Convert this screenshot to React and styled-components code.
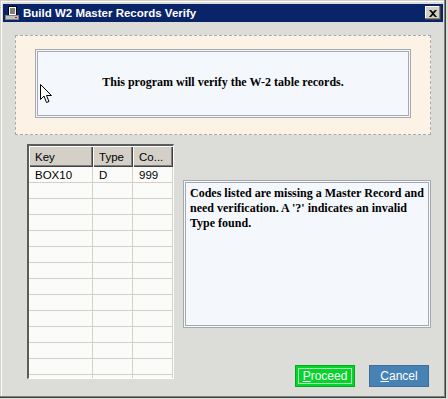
import React from "react";
import styled, { createGlobalStyle } from "styled-components";

const GlobalStyle = createGlobalStyle`
  html, body { margin: 0; padding: 0; background: #dcddd9; width: 448px; height: 399px; overflow: hidden; }
  * { box-sizing: border-box; }
`;

const Window = styled.div`
  position: relative;
  width: 446px;
  height: 398px;
  background: #dcddd9;
  padding: 4px 3px 3px 3px;
  display: flex;
  flex-direction: column;
  box-shadow: inset -1px -1px 0 #404040, inset -2px -2px 0 #808080,
    inset 1px 1px 0 #d4d0c8, inset 2px 2px 0 #ffffff;
`;

const TitleBar = styled.div`
  height: 18px;
  background: #0a246a;
  display: flex;
  align-items: center;
  padding: 0 2px 0 2px;
  color: #fff;
  flex-shrink: 0;
`;

const TitleText = styled.span`
  font-family: "Liberation Sans", Arial, sans-serif;
  font-weight: bold;
  font-size: 11.5px;
  margin-left: 4px;
  flex: 1;
  white-space: nowrap;
`;

const CloseButton = styled.div`
  width: 16px;
  height: 14px;
  background: #d4d0c8;
  display: flex;
  align-items: center;
  justify-content: center;
  box-shadow: inset -1px -1px 0 #404040, inset -2px -2px 0 #808080,
    inset 1px 1px 0 #ffffff;
`;

const Body = styled.div`
  padding: 13px 12px 0 12px;
  display: flex;
  flex-direction: column;
`;

const Banner = styled.div`
  width: 416px;
  height: 100px;
  border: 1px dashed #a9a9a9;
  background: #fcf3e6;
  padding: 13px 19px 0 19px;
`;

const InfoBox = styled.div`
  border: 3px double #a6a9ae;
  background: #f4f8fc;
  font-family: "Liberation Serif", "Times New Roman", serif;
  font-weight: bold;
  font-size: 12px;
  color: #000;
  height: ${(p) => p.$h}px;
  width: ${(p) => p.$w}px;
  display: flex;
  align-items: ${(p) => (p.$center ? "center" : "flex-start")};
  justify-content: ${(p) => (p.$center ? "center" : "flex-start")};
  padding: ${(p) => (p.$center ? "0 0 3px 0" : "3px 2px 3px 4px")};
  line-height: 15px;
`;

const Lower = styled.div`
  display: flex;
  margin-top: 9px;
  padding-left: 12px;
  gap: 9px;
`;

const Grid = styled.div`
  width: 147px;
  height: 235px;
  border-top: 2px solid #5c5c5c;
  border-left: 2px solid #5c5c5c;
  border-right: 1px solid #ffffff;
  border-bottom: 1px solid #ffffff;
  background: #fbfcfa;
  overflow: hidden;
  display: flex;
  flex-direction: column;
  font-family: "Liberation Sans", Arial, sans-serif;
  font-size: 11.5px;
  color: #000;
`;

const Row = styled.div`
  display: grid;
  grid-template-columns: 64px 40px 40px;
  height: ${(p) => (p.$header ? 21 : 16)}px;
  flex-shrink: 0;
  border-bottom: ${(p) => (p.$header ? "none" : "1px solid #d4d0c8")};
`;

const HeadCell = styled.div`
  background: #d4d0c8;
  display: flex;
  align-items: center;
  padding: 1px 0 0 6px;
  box-shadow: inset 1px 1px 0 #ffffff, inset -1px -1px 0 #404040,
    inset -2px -2px 0 #808080;
  white-space: nowrap;
`;

const Cell = styled.div`
  border-right: 1px solid #d4d0c8;
  display: flex;
  align-items: center;
  padding-left: 6px;
  white-space: nowrap;
`;

const RightCol = styled.div`
  display: flex;
  flex-direction: column;
  padding-top: 36px;
`;

const Buttons = styled.div`
  display: flex;
  justify-content: flex-end;
  gap: 14px;
  margin-top: 37px;
  padding-right: 2px;
`;

const Button = styled.div`
  width: 60px;
  height: 22px;
  display: flex;
  align-items: center;
  justify-content: center;
  font-family: "Liberation Sans", Arial, sans-serif;
  font-size: 12px;
  color: #fff;
  background: ${(p) => p.$bg};
  border: 1px solid ${(p) => p.$edge};
  position: relative;
  ${(p) =>
    p.$focus
      ? `&::after { content: ""; position: absolute; inset: 2px; border: 1px solid #b8d8b8; }`
      : ""}
  u { text-decoration: underline; }
`;

const Cursor = styled.svg`
  position: absolute;
  left: 40px;
  top: 84px;
`;

const rows = Array.from({ length: 14 }, (_, i) =>
  i === 0 ? ["BOX10", "D", "999"] : ["", "", ""]
);

export default function App() {
  return (
    <>
      <GlobalStyle />
      <Window>
        <TitleBar>
          <svg width="14" height="15" viewBox="0 0 14 15">
            <rect x="3.5" y="0.5" width="8" height="10" fill="#fff" stroke="#000" />
            <line x1="5" y1="3" x2="10" y2="3" stroke="#000" />
            <line x1="5" y1="5" x2="10" y2="5" stroke="#000" />
            <line x1="5" y1="7" x2="10" y2="7" stroke="#000" />
            <rect x="0.5" y="9.5" width="13" height="4" fill="#c0c0c0" stroke="#808080" />
            <rect x="10" y="11" width="2" height="1" fill="#e00000" />
          </svg>
          <TitleText>Build W2 Master Records Verify</TitleText>
          <CloseButton>
            <svg width="8" height="7" viewBox="0 0 8 7">
              <path d="M0 0 L2 0 L4 2 L6 0 L8 0 L5 3.5 L8 7 L6 7 L4 5 L2 7 L0 7 L3 3.5 Z" fill="#000" />
            </svg>
          </CloseButton>
        </TitleBar>
        <Body>
          <Banner>
            <InfoBox $center $w={376} $h={69}>
              This program will verify the W-2 table records.
            </InfoBox>
          </Banner>
          <Lower>
            <Grid>
              <Row $header>
                <HeadCell>Key</HeadCell>
                <HeadCell>Type</HeadCell>
                <HeadCell>Co...</HeadCell>
              </Row>
              {rows.map((r, i) => (
                <Row key={i}>
                  <Cell>{r[0]}</Cell>
                  <Cell>{r[1]}</Cell>
                  <Cell>{r[2]}</Cell>
                </Row>
              ))}
            </Grid>
            <RightCol>
              <InfoBox $w={248} $h={148}>
                Codes listed are missing a Master Record and need verification. A '?'
                indicates an invalid Type found.
              </InfoBox>
              <Buttons>
                <Button $bg="#05d52b" $edge="#0aa526" $focus>
                  <span><u>P</u>roceed</span>
                </Button>
                <Button $bg="#4682b4" $edge="#3b6e9c">
                  <span><u>C</u>ancel</span>
                </Button>
              </Buttons>
            </RightCol>
          </Lower>
        </Body>
        <Cursor width="13" height="20" viewBox="0 0 13 20">
          <path d="M0.5 0.5 L0.5 15.5 L4 12 L6.5 18.5 L9 17.5 L6.5 11.5 L11.5 11.5 Z" fill="#fff" stroke="#000" strokeWidth="1" />
        </Cursor>
      </Window>
    </>
  );
}
